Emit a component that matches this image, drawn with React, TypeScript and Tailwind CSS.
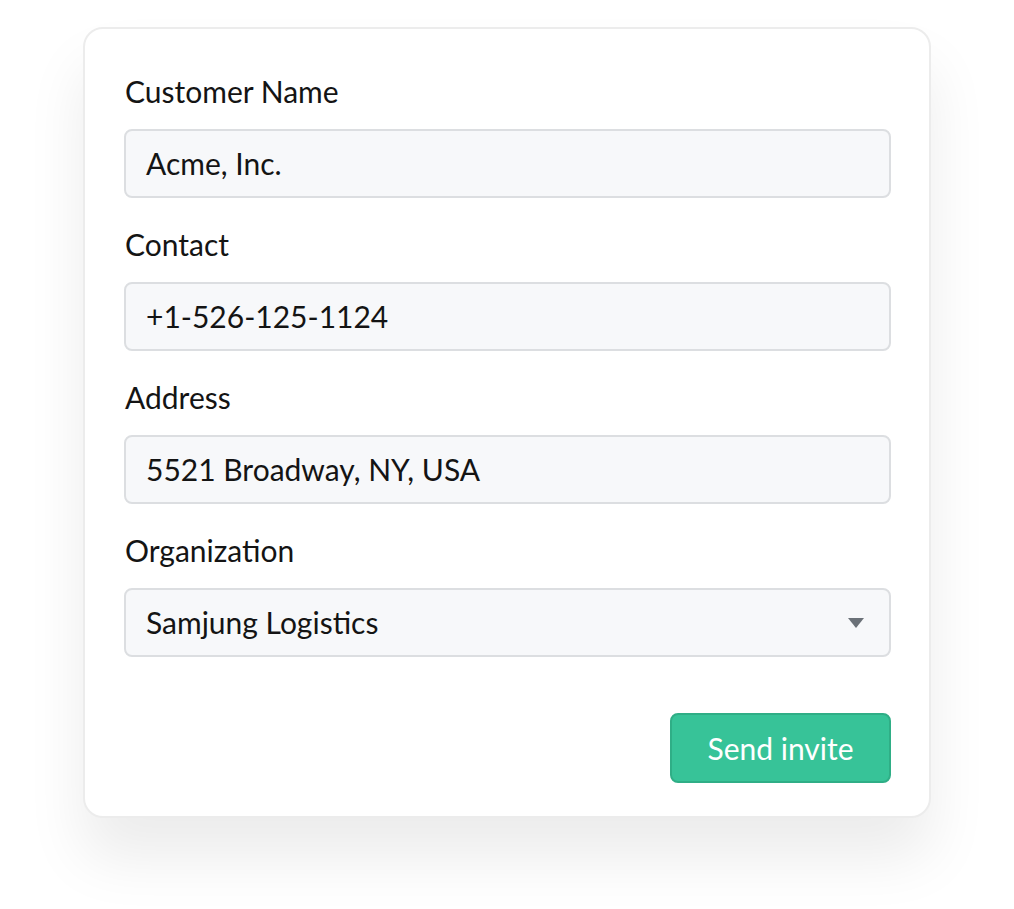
import { useState } from "react";

type Field = {
  label: string;
  value: string;
  select?: boolean;
};

const fields: Field[] = [
  { label: "Customer Name", value: "Acme, Inc." },
  { label: "Contact", value: "+1-526-125-1124" },
  { label: "Address", value: "5521 Broadway, NY, USA" },
  { label: "Organization", value: "Samjung Logistics", select: true },
];

const FieldRow = ({ field }: { field: Field }) => (
  <div className="flex flex-col">
    <label className="text-[30px] leading-9 text-[#141414] pl-[1px]">
      {field.label}
    </label>
    <div className="relative mt-5 h-[69px] flex items-center rounded-[8px] border-2 border-[#dcdee1] bg-[#f7f8fa] px-5">
      <span className="text-[30px] text-[#141414]">{field.value}</span>
      {field.select && (
        <svg
          className="absolute right-6 top-1/2 -translate-y-1/2"
          width="18"
          height="12"
          viewBox="0 0 18 12"
        >
          <path d="M1 1h16l-8 10z" fill="#6b7178" />
        </svg>
      )}
    </div>
  </div>
);

export default function App() {
  const [sent, setSent] = useState(false);

  return (
    <div
      className="min-h-[909px] w-full bg-white pt-[27px] pl-[83px]"
      style={{ fontFamily: "Lato, 'Open Sans', sans-serif" }}
    >
      <div className="w-[848px] rounded-[20px] border-2 border-[#ececec] bg-white pl-[39px] pr-[38px] pt-[44px] pb-[33px] shadow-[0_40px_60px_rgba(0,0,0,0.08)]">
        <div className="flex flex-col gap-[28px]">
          {fields.map((f) => (
            <FieldRow key={f.label} field={f} />
          ))}
        </div>
        <div className="mt-[56px] flex justify-end">
          <button
            onClick={() => setSent(true)}
            className="h-[70px] w-[221px] rounded-[8px] border-2 border-[#2fae86] bg-[#37c398] text-[30px] text-white"
          >
            {sent ? "Sent" : "Send invite"}
          </button>
        </div>
      </div>
    </div>
  );
}
